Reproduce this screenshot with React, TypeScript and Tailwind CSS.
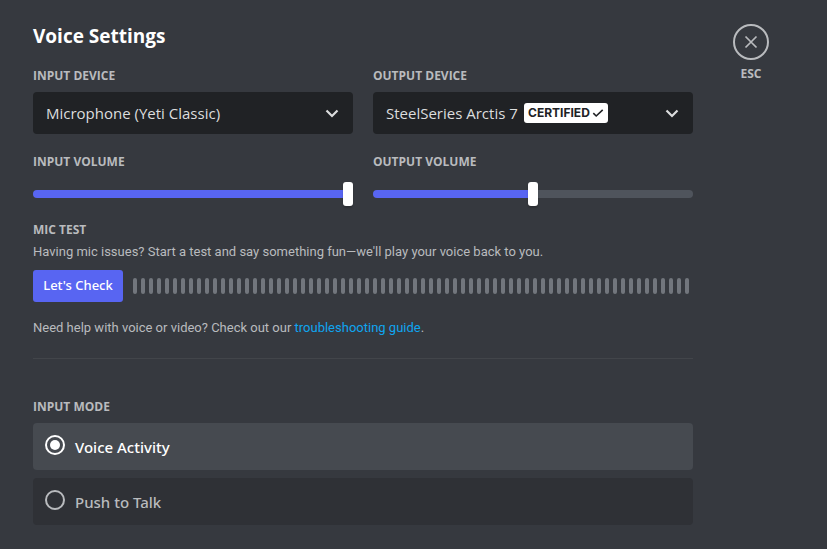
import React, { useState } from 'react';

interface DeviceSelectProps {
  id: string;
  label: string;
  options: string[];
  certified?: boolean;
}

interface VolumeSliderProps {
  id: string;
  label: string;
  initial: number;
}

const METER_BARS = 70;

const INPUT_MODES = [
  { key: 'voice', label: 'Voice Activity' },
  { key: 'ptt', label: 'Push to Talk' }
];

const headingClass = 'block text-xs leading-4 font-bold uppercase text-[#b9bbbe]';
const bodyClass = "font-['Roboto',sans-serif] text-[13px] leading-5";

const DeviceSelect: React.FC<DeviceSelectProps> = ({ id, label, options, certified }) => {
  return (
    <div className="flex-1 min-w-0">
      <label htmlFor={id} className={headingClass}>{label}</label>
      <div className="relative mt-2">
        <select
          id={id}
          className="block w-full h-[42px] appearance-none rounded bg-[#202225] pl-[13px] pr-10 text-[15px] font-medium text-[#dcddde] outline-none"
        >
          {options.map((option) => <option key={option}>{option}</option>)}
        </select>
        {certified && (
          <span className="pointer-events-none absolute left-[151px] top-[11px] flex h-5 items-center gap-0.5 rounded-[3px] bg-white px-1 font-['Inter',sans-serif] text-xs font-bold text-[#202225]">
            CERTIFIED
            <svg className="h-3 w-3" viewBox="0 0 12 12" fill="none" stroke="currentColor" strokeWidth="1.6">
              <path d="M1.3 6.2 4.2 9 10.7 2.8" />
            </svg>
          </span>
        )}
        <svg className="pointer-events-none absolute right-3 top-3 h-[18px] w-[18px] text-[#dcddde]" viewBox="0 0 18 18" fill="none" stroke="currentColor" strokeWidth="2.2">
          <path d="M3.5 6.5 9 12l5.5-5.5" />
        </svg>
      </div>
    </div>
  );
};

const VolumeSlider: React.FC<VolumeSliderProps> = ({ id, label, initial }) => {
  const [value, setValue] = useState(initial);
  return (
    <div className="flex-1 min-w-0">
      <label htmlFor={id} className={headingClass}>{label}</label>
      <input
        id={id}
        type="range"
        min={0}
        max={100}
        value={value}
        onChange={(e) => setValue(Number(e.target.value))}
        style={{ backgroundImage: `linear-gradient(to right, #5865f2 ${value}%, #4f545c ${value}%)` }}
        className="mt-5 block h-2 w-full cursor-pointer appearance-none rounded-full outline-none [&::-webkit-slider-thumb]:h-6 [&::-webkit-slider-thumb]:w-[10px] [&::-webkit-slider-thumb]:appearance-none [&::-webkit-slider-thumb]:rounded-[3px] [&::-webkit-slider-thumb]:bg-white [&::-webkit-slider-thumb]:shadow-[0_2px_2px_rgba(0,0,0,0.2)]"
      />
    </div>
  );
};

const App: React.FC = () => {
  const [mode, setMode] = useState('voice');
  return (
    <div className="flex min-h-screen gap-10 bg-[#36393f] pl-[33px] pr-4 pt-6 pb-6 font-['Open_Sans',sans-serif] text-[#b9bbbe]">
      <main className="min-w-0 max-w-[660px] flex-1">
        <h1 className="text-[19px] leading-6 font-bold text-white">Voice Settings</h1>

        <div className="mt-5 flex gap-5">
          <DeviceSelect id="input-device" label="Input Device" options={['Microphone (Yeti Classic)']} />
          <DeviceSelect id="output-device" label="Output Device" options={['SteelSeries Arctis 7']} certified />
        </div>

        <div className="mt-5 flex gap-5">
          <VolumeSlider id="input-volume" label="Input Volume" initial={100} />
          <VolumeSlider id="output-volume" label="Output Volume" initial={50} />
        </div>

        <section>
          <h2 className={`mt-6 ${headingClass}`}>Mic Test</h2>
          <p className={`mt-1 ${bodyClass}`}>
            Having mic issues? Start a test and say something fun—we'll play your voice back to you.
          </p>
          <div className="mt-2 flex items-center gap-[10px]">
            <button type="button" className="h-8 w-[90px] shrink-0 rounded-[3px] bg-[#5865f2] font-['Noto_Sans',sans-serif] text-[13px] font-medium text-white">
              Let's Check
            </button>
            <div className="flex h-4 min-w-0 flex-1 gap-1 overflow-hidden">
              {Array.from({ length: METER_BARS }, (_, i) => (
                <span key={i} className="w-1 shrink-0 rounded-sm bg-[#72767d]" />
              ))}
            </div>
          </div>
          <p className={`mt-4 ${bodyClass}`}>
            Need help with voice or video? Check out our <a href="#guide" className="text-[#0fa5f0]">troubleshooting guide</a>.
          </p>
        </section>

        <hr className="mt-5 border-t border-[#42454a]" />

        <fieldset className="mt-10">
          <legend className={headingClass}>Input Mode</legend>
          <div className="mt-2 flex flex-col gap-2">
            {INPUT_MODES.map(({ key, label }) => {
              const active = mode === key;
              return (
                <label
                  key={key}
                  className={`flex h-[47px] cursor-pointer items-start gap-[10px] rounded px-3 pt-3 font-['Noto_Sans',sans-serif] text-[15px] leading-6 font-medium ${active ? 'bg-[#464a50] text-white' : 'bg-[#2f3136] text-[#b9bbbe]'}`}
                >
                  <input
                    type="radio"
                    name="input-mode"
                    checked={active}
                    onChange={() => setMode(key)}
                    className="h-5 w-5 shrink-0 appearance-none rounded-full border-2 border-current p-[3px] checked:bg-current checked:bg-clip-content"
                  />
                  {label}
                </label>
              );
            })}
          </div>
        </fieldset>
      </main>

      <button type="button" aria-label="Close" className="flex w-9 shrink-0 flex-col items-center self-start">
        <svg className="h-9 w-9" viewBox="0 0 36 36" fill="none" stroke="currentColor" strokeWidth="2">
          <circle cx="18" cy="18" r="17" />
          <path strokeWidth="1.7" d="m12.5 12.5 11 11m0-11-11 11" />
        </svg>
        <span className="mt-1.5 text-xs leading-4 font-bold">ESC</span>
      </button>
    </div>
  );
};

export default App;
